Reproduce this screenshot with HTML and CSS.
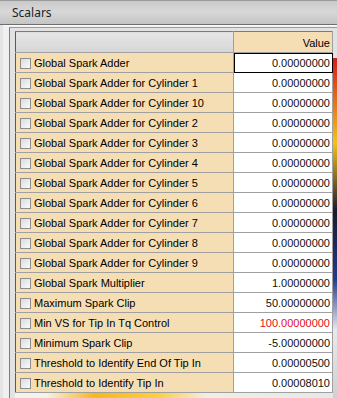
FILE: index.html
```
<!DOCTYPE html>
<html>
<head>
  <meta charset="utf-8">
  <title>Scalars</title>
  <link rel="stylesheet" href="styles.css">
</head>
<body>
  <div class="window">
    <div class="titlebar">Scalars</div>
    <div class="window-body">
      <div class="frame">
        <div class="grid-wrap">
          <table class="grid">
            <thead>
              <tr>
                <th class="col-name"></th>
                <th class="col-value">Value</th>
              </tr>
            </thead>
            <tbody>
              <tr><td class="name"><span class="check"></span>Global Spark Adder</td><td class="value selected">0.00000000</td></tr>
              <tr><td class="name"><span class="check"></span>Global Spark Adder for Cylinder 1</td><td class="value">0.00000000</td></tr>
              <tr><td class="name"><span class="check"></span>Global Spark Adder for Cylinder 10</td><td class="value">0.00000000</td></tr>
              <tr><td class="name"><span class="check"></span>Global Spark Adder for Cylinder 2</td><td class="value">0.00000000</td></tr>
              <tr><td class="name"><span class="check"></span>Global Spark Adder for Cylinder 3</td><td class="value">0.00000000</td></tr>
              <tr><td class="name"><span class="check"></span>Global Spark Adder for Cylinder 4</td><td class="value">0.00000000</td></tr>
              <tr><td class="name"><span class="check"></span>Global Spark Adder for Cylinder 5</td><td class="value">0.00000000</td></tr>
              <tr><td class="name"><span class="check"></span>Global Spark Adder for Cylinder 6</td><td class="value">0.00000000</td></tr>
              <tr><td class="name"><span class="check"></span>Global Spark Adder for Cylinder 7</td><td class="value">0.00000000</td></tr>
              <tr><td class="name"><span class="check"></span>Global Spark Adder for Cylinder 8</td><td class="value">0.00000000</td></tr>
              <tr><td class="name"><span class="check"></span>Global Spark Adder for Cylinder 9</td><td class="value">0.00000000</td></tr>
              <tr><td class="name"><span class="check"></span>Global Spark Multiplier</td><td class="value">1.00000000</td></tr>
              <tr><td class="name"><span class="check"></span>Maximum Spark Clip</td><td class="value">50.00000000</td></tr>
              <tr><td class="name"><span class="check"></span>Min VS for Tip In Tq Control</td><td class="value out-of-range">100.00000000</td></tr>
              <tr><td class="name"><span class="check"></span>Minimum Spark Clip</td><td class="value">-5.00000000</td></tr>
              <tr><td class="name"><span class="check"></span>Threshold to Identify End Of Tip In</td><td class="value">0.00000500</td></tr>
              <tr><td class="name"><span class="check"></span>Threshold to Identify Tip In</td><td class="value">0.00008010</td></tr>
            </tbody>
          </table>
          <div class="below-grid"></div>
        </div>
        <div class="backdrop"></div>
      </div>
    </div>
  </div>
</body>
</html>
```

FILE: styles.css
```
* {
  margin: 0;
  padding: 0;
  box-sizing: border-box;
}

body {
  width: 337px;
  height: 398px;
  overflow: hidden;
  background: #f0f0f0;
  font-family: "Liberation Sans", Arial, sans-serif;
  font-size: 11px;
  color: #000;
}

/* window chrome */
.window {
  height: 398px;
  border-left: 3px solid #e4e4e4;
  display: flex;
  flex-direction: column;
}

.titlebar {
  height: 25px;
  margin-left: -3px;
  padding: 3px 0 0 12px;
  font-family: "Noto Sans", "Liberation Sans", sans-serif;
  font-size: 12px;
  color: #1e1e1e;
  background: linear-gradient(to bottom, #c9c9c9, #d8d8d8 45%, #c4c4c4);
  border-top: 1px solid #9a9a9a;
  border-bottom: 1px solid #6e6e6e;
}

.window-body {
  flex: 1;
  display: flex;
  flex-direction: column;
  padding: 1px 0 0 6px;
  border-top: 1px solid #fafafa;
}

.frame {
  flex: 1;
  display: flex;
  border-left: 1px solid #7c7c7c;
  border-top: 1px solid #9c9c9c;
  padding: 3px 0 0 5px;
  background: #e2e2e2;
}

.grid-wrap {
  display: flex;
  flex-direction: column;
}

/* grid */
.grid {
  border-collapse: collapse;
  table-layout: fixed;
  width: 318px;
  border-left: 1px solid #5a5a5a;
  border-top: 1px solid #7a7a7a;
}

.grid th,
.grid td {
  height: 20px;
  padding: 0 2px 0 0;
  border-bottom: 1px solid #a0a0a0;
  border-right: 1px solid #a0a0a0;
  white-space: nowrap;
  overflow: hidden;
  font-weight: normal;
}

.grid thead th {
  height: 21px;
  background: linear-gradient(to bottom, #e6e6e6, #d6d6d6);
}

.grid th.col-name {
  width: 218px;
}

.grid th.col-value {
  background: #f5deb3;
  text-align: right;
  vertical-align: bottom;
  padding-bottom: 3px;
}

.grid td.name {
  background: #f5deb3;
  padding-left: 4px;
}

.check {
  display: inline-block;
  width: 11px;
  height: 11px;
  margin-right: 3px;
  vertical-align: -2px;
  border: 1px solid #8d8d8d;
  background: linear-gradient(to bottom right, #dcdcdc, #fafafa);
}

.grid td.value {
  background: #fff;
  text-align: right;
  color: #101010;
}

.grid td.selected {
  outline: 1px solid #000;
  outline-offset: -1px;
}

.grid td.out-of-range {
  color: #e0101a;
}

/* empty space under the last row: wallpaper shows through */
.below-grid {
  flex: 1;
  background: linear-gradient(100deg, #f4f2ec 10%, #f6b81c 25%, #f9d040 45%, #f2eee4 60%, #e8e8e8);
}

/* bits of the desktop wallpaper behind the window */
.backdrop {
  flex: 1;
  margin-top: 27px;
  background: linear-gradient(to bottom, #d21e1e 0%, #f2c21a 25%, #1a1a2a 45%, #233a8a 65%, #e8e8f0 80%, #d0d0d0 100%);
}
```
